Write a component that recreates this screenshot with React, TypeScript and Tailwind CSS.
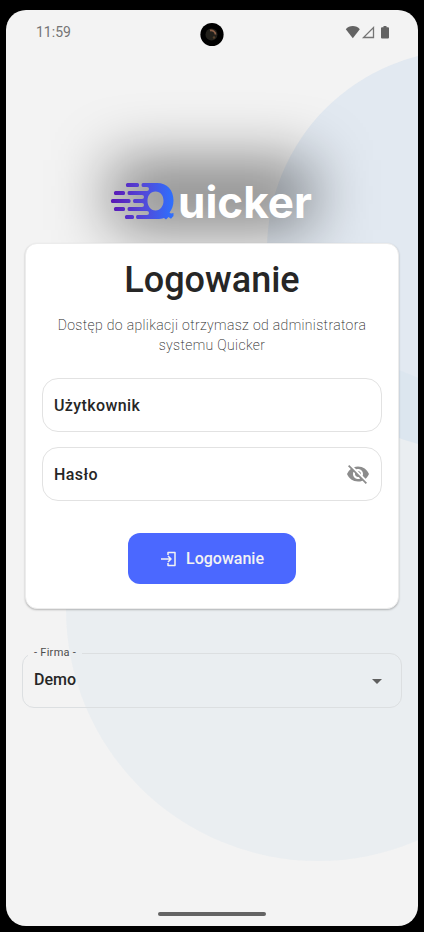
import { FormEvent, useState } from "react";
import { MdArrowDropDown, MdVisibility, MdVisibilityOff } from "react-icons/md";

function StatusBar() {
  return (
    <header className="relative flex h-11 items-center justify-between pl-[30px] pr-[27px] text-[#757575]">
      <span className="text-sm">11:59</span>
      <svg
        className="absolute left-1/2 top-3 -translate-x-1/2"
        width="25"
        height="25"
        viewBox="0 0 25 25"
        aria-hidden="true"
      >
        <circle cx="12.5" cy="12.5" r="11.6" fill="#000" />
        <circle cx="12" cy="12.500" r="6" fill="#22201b" />
        <path d="M10.500 8.500c3-.5 5.500 1.500 5.500 4" fill="none" stroke="#8a5f48" strokeWidth="1.800" />
        <circle cx="14.500" cy="15.500" r="1.200" fill="#54402b" />
      </svg>
      <svg width="46" height="14" viewBox="0 0 46 14" fill="#636363" aria-hidden="true">
        <path d="M7.800 13.200 .8 4.200C2.500 2.200 5 1 7.800 1s5.300 1.200 7 3.200Z" />
        <path d="M18.500 12.500h10v-10Z" fill="none" stroke="#757575" strokeWidth="1.300" />
        <path d="M38.500 1h3v1.200h1.500q1 0 1 1v9.300q0 1-1 1h-6q-1 0-1-1V3.200q0-1 1-1h1.500Z" />
      </svg>
    </header>
  );
}

function Logo() {
  return (
    <div className="relative">
      <div className="absolute inset-x-0 -bottom-2.5 -top-5 bg-black/45 blur-[30px]" />
      <svg
        width="202"
        height="40"
        viewBox="0 0 202 40"
        role="img"
        aria-label="Quicker"
        className="relative overflow-visible"
      >
        <defs>
          <linearGradient id="speed" gradientUnits="userSpaceOnUse" x1="0" y1="0" x2="64" y2="0">
            <stop offset="0" stopColor="#5a17b4" />
            <stop offset="0.5" stopColor="#5348d8" />
            <stop offset="1" stopColor="#2c72ff" />
          </linearGradient>
        </defs>
        <g fill="url(#speed)">
          <rect x="15" y="3" width="13" height="4" rx="1.500" />
          <rect x="3" y="11" width="11" height="4" rx="1.500" />
          <rect x="0" y="19" width="19.500" height="4" rx="1.500" />
          <rect x="3" y="27" width="11" height="4" rx="1.500" />
          <rect x="14" y="35" width="9" height="4" rx="1.500" />
          <path
            fillRule="evenodd"
            d="M32 3H46C56 3 62.500 10 62.500 20.500C62.500 25.500 61 29.500 58.500 32.500L60 33.500L62.500 33V36L60 38.800L57.500 37L55 39.500L53 38C51 38.800 49 39 46 39H26.500Q25 39 25 37T26.500 35H36Q38 35 38 33T36 31H18Q16.500 31 16.500 29T18 27H31Q33 27 33 25T31 23H23.500Q22 23 22 21T23.500 19H31Q33 19 33 17T31 15H18Q16.500 15 16.500 13T18 11H36Q38 11 38 9T36 7H32Q30.500 7 30.500 5T32 3ZM44.500 11.500C39.500 11.500 36.500 15.500 36.500 20.800C36.500 26 39.500 30.500 44.500 30.500C49.500 30.500 52.500 26 52.500 20.800C52.500 15.500 49.500 11.500 44.500 11.500Z"
          />
        </g>
        <text
          x="67"
          y="38"
          fill="#fff"
          fontSize="44"
          fontWeight="700"
          className="font-['Inter',sans-serif]"
        >
          uicker
        </text>
      </svg>
    </div>
  );
}

function LoginIcon() {
  return (
    <svg
      width="16"
      height="16"
      viewBox="0 0 16 16"
      fill="none"
      stroke="currentColor"
      strokeWidth="1.500"
      strokeLinejoin="round"
      aria-hidden="true"
    >
      <path d="M8 4V1.500h7v13H8V12M1 8h10M8 5l3 3-3 3" />
    </svg>
  );
}

const fieldClass =
  "h-[54px] w-full rounded-2xl border border-[#e2e2e2] bg-white pl-[11px] pr-12 text-base font-medium tracking-wide text-[#262626] outline-none placeholder:text-[#262626]";

function LoginForm() {
  const [login, setLogin] = useState("");
  const [password, setPassword] = useState("");
  const [visible, setVisible] = useState(false);

  const onSubmit = (e: FormEvent) => {
    e.preventDefault();
  };

  return (
    <form
      className="flex w-full flex-col rounded-xl border border-[#ececec] bg-white px-4 pb-6 pt-4 shadow-[0_1px_2px_rgba(0,0,0,0.25)]"
      onSubmit={onSubmit}
    >
      <h1 className="text-center text-4xl font-medium text-[#262626]">Logowanie</h1>
      <p className="mt-[15px] text-center text-sm font-extralight tracking-wide text-[#262626]">
        Dostęp do aplikacji otrzymasz od administratora systemu Quicker
      </p>
      <input
        type="text"
        aria-label="Użytkownik"
        placeholder="Użytkownik"
        className={`mt-[23px] ${fieldClass}`}
        value={login}
        onChange={(e) => setLogin(e.target.value)}
      />
      <div className="relative mt-[15px]">
        <input
          type={visible ? "text" : "password"}
          aria-label="Hasło"
          placeholder="Hasło"
          className={fieldClass}
          value={password}
          onChange={(e) => setPassword(e.target.value)}
        />
        <button
          type="button"
          aria-label="Pokaż hasło"
          className="absolute inset-y-0 right-3 text-[#8c8c8c]"
          onClick={() => setVisible(!visible)}
        >
          {visible ? <MdVisibility size={24} /> : <MdVisibilityOff size={24} />}
        </button>
      </div>
      <button
        type="submit"
        className="mt-8 flex h-[51px] items-center gap-2.5 self-center rounded-xl bg-[#4b68ff] px-8 text-base font-medium text-[#f3f3f3]"
      >
        <LoginIcon />
        Logowanie
      </button>
    </form>
  );
}

function CompanySelect() {
  return (
    <fieldset className="relative h-[63px] w-full rounded-xl border border-[#dcdfe1] px-[5px]">
      <legend className="px-1.5 text-[11px] leading-4 tracking-wide text-[#4d4d4d]">
        <label htmlFor="company">- Firma -</label>
      </legend>
      <select
        id="company"
        className="h-[38px] w-full appearance-none bg-transparent px-1.5 text-base font-medium text-[#262626] outline-none"
      >
        <option>Demo</option>
      </select>
      <MdArrowDropDown
        size={24}
        className="pointer-events-none absolute right-3 top-2 text-[#5f5f5f]"
      />
    </fieldset>
  );
}

export default function App() {
  return (
    <div className="flex min-h-screen bg-black px-1.5 pb-1.5 pt-2.5 font-['Roboto',sans-serif]">
      <div className="relative isolate flex flex-1 flex-col overflow-hidden rounded-[20px] bg-[#f3f3f3]">
        <div className="absolute -right-[249px] top-10 -z-10 size-[400px] rounded-full bg-[#afcbeb]/25" />
        <div className="absolute -right-[152px] top-[347px] -z-10 size-[504px] rounded-full bg-[#c6daeb]/20" />
        <StatusBar />
        <main className="flex flex-1 flex-col items-center px-4">
          <div className="mt-[126px] flex">
            <Logo />
          </div>
          <div className="relative mt-[23px] w-full px-[3px]">
            <LoginForm />
          </div>
          <div className="mt-9 w-full">
            <CompanySelect />
          </div>
        </main>
        <div className="mb-2.5 h-1 w-[108px] self-center rounded-full bg-[#636363]" />
      </div>
    </div>
  );
}
